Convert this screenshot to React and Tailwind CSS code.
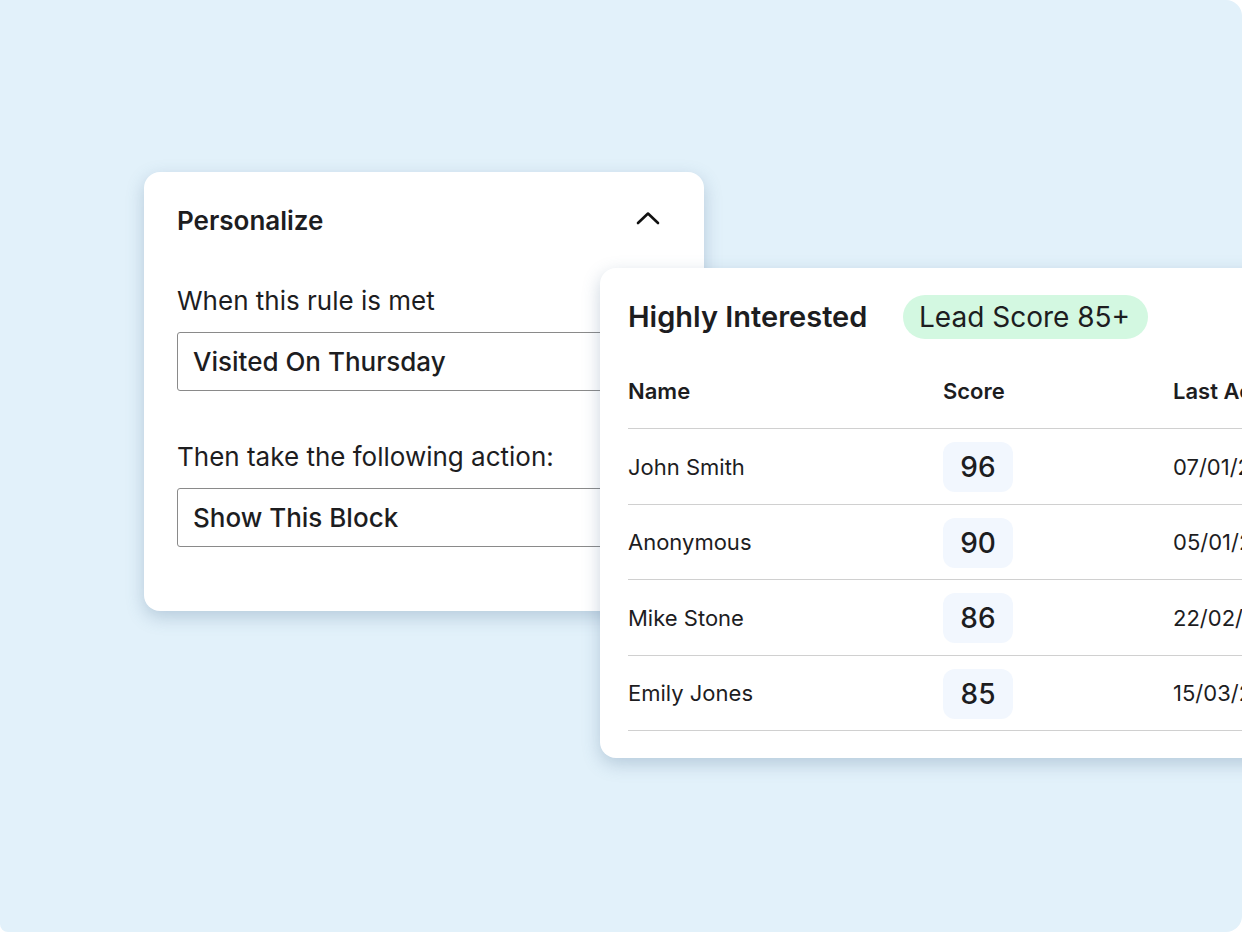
import React from 'react'

const leads = [
  { name: 'John Smith', score: 96, date: '07/01/2024' },
  { name: 'Anonymous', score: 90, date: '05/01/2024' },
  { name: 'Mike Stone', score: 86, date: '22/02/2024' },
  { name: 'Emily Jones', score: 85, date: '15/03/2024' },
]

const font = { fontFamily: 'Inter, "Noto Sans", sans-serif' }

function ChevronUp() {
  return (
    <svg width="24" height="14" viewBox="0 0 24 14" fill="none">
      <polyline points="2,12 12,2.5 22,12" stroke="#111" strokeWidth="2.6" strokeLinecap="round" strokeLinejoin="round" />
    </svg>
  )
}

function PersonalizeCard() {
  return (
    <div className="absolute left-[144px] top-[172px] w-[560px] rounded-2xl bg-white pl-[33px] pr-[33px] pt-[35px] pb-[64px] shadow-[0_6px_18px_rgba(70,105,140,0.28)]">
      {/* Header */}
      <div className="flex h-[28px] items-center justify-between">
        <h2 className="text-[26px] leading-[28px] font-semibold text-[#1d1d1f]">Personalize</h2>
        <div className="mr-[11px] -mt-[6px]">
          <ChevronUp />
        </div>
      </div>

      <div className="mt-[52px] h-[28px] whitespace-nowrap text-[26px] leading-[28px] text-[#1d1d1f]">When this rule is met</div>
      <div className="mt-[17px] flex h-[59px] items-center whitespace-nowrap rounded-[3px] border-[1.5px] border-[#8a8a8a] px-[15px] text-[26px] font-medium text-[#1d1d1f]">
        Visited On Thursday
      </div>

      <div className="mt-[52px] h-[28px] whitespace-nowrap text-[26px] leading-[28px] text-[#1d1d1f]">Then take the following action:</div>
      <div className="mt-[17px] flex h-[59px] items-center whitespace-nowrap rounded-[3px] border-[1.5px] border-[#8a8a8a] px-[15px] text-[26px] font-medium text-[#1d1d1f]">
        Show This Block
      </div>
    </div>
  )
}

function LeadsCard() {
  return (
    <div className="absolute left-[600px] top-[268px] w-[720px] rounded-2xl bg-white pl-[28px] pt-[27px] pb-[27px] shadow-[0_6px_18px_rgba(70,105,140,0.28)]">
      {/* Title */}
      <div className="flex h-[44px] items-center">
        <h2 className="w-[275px] whitespace-nowrap text-[29px] leading-[36px] font-semibold text-[#1d1d1f]">Highly Interested</h2>
        <span className="flex h-[44px] items-center whitespace-nowrap rounded-full bg-[#d3f8e1] pl-[16px] pr-[18px] text-[28px] text-[#1d1d1f]">
          Lead Score 85+
        </span>
      </div>

      {/* Table */}
      <div className="mt-[14px]">
        <div className="flex h-[76px] items-center border-b-[1.5px] border-[#d0d0d0] pt-[2px] text-[22px] font-semibold text-[#1d1d1f]">
          <div className="w-[315px]">Name</div>
          <div className="w-[230px]">Score</div>
          <div className="whitespace-nowrap">Last Activity</div>
        </div>
        {leads.map((lead) => (
          <div key={lead.name} className="flex h-[75.5px] items-center border-b-[1.5px] border-[#d0d0d0] pt-[2px] text-[22px] text-[#1d1d1f]">
            <div className="w-[315px]">{lead.name}</div>
            <div className="w-[230px]">
              <span className="flex h-[50px] w-[70px] items-center justify-center rounded-xl bg-[#f2f7fe] text-[28px] font-medium">
                {lead.score}
              </span>
            </div>
            <div className="whitespace-nowrap">{lead.date}</div>
          </div>
        ))}
      </div>
    </div>
  )
}

export default function App() {
  return (
    <div className="min-h-screen bg-white" style={font}>
      <div className="relative h-[932px] w-[1242px] overflow-hidden rounded-tr-2xl rounded-br-2xl rounded-bl-lg bg-[#e2f1fa]">
        <PersonalizeCard />
        <LeadsCard />
      </div>
    </div>
  )
}
